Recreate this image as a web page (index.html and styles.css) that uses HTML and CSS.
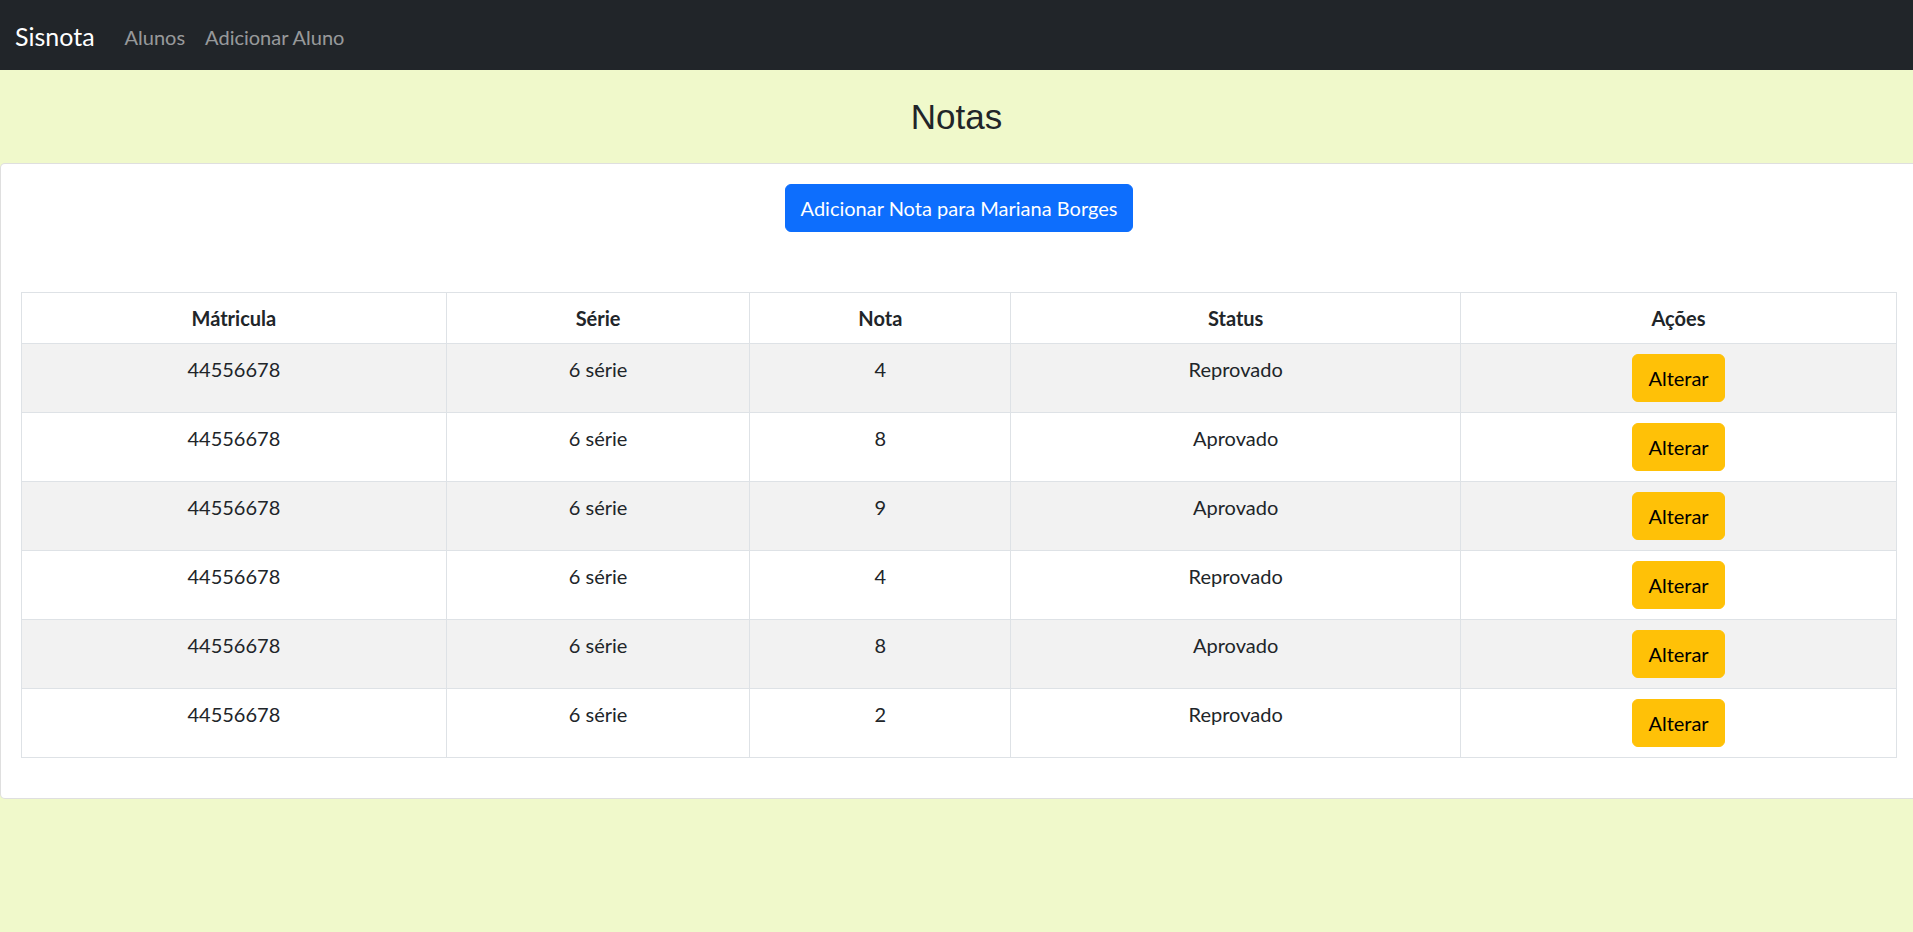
FILE: index.html
```html
<!DOCTYPE html>
<html lang="pt-BR">
<head>
<meta charset="utf-8">
<title>Sisnota</title>
<link rel="stylesheet" href="styles.css">
</head>
<body>
<nav class="navbar">
  <a class="brand" href="#">Sisnota</a>
  <a class="nav-link" href="#">Alunos</a>
  <a class="nav-link" href="#">Adicionar Aluno</a>
</nav>
<h2 class="page-title">Notas</h2>
<div class="card">
  <div class="actions">
    <button class="btn btn-primary">Adicionar Nota para Mariana Borges</button>
  </div>
  <table class="grades">
    <thead>
      <tr>
        <th class="c-mat">Mátricula</th>
        <th class="c-serie">Série</th>
        <th class="c-nota">Nota</th>
        <th class="c-status">Status</th>
        <th class="c-acoes">Ações</th>
      </tr>
    </thead>
    <tbody>
      <tr><td>44556678</td><td>6 série</td><td>4</td><td>Reprovado</td><td><button class="btn btn-warning">Alterar</button></td></tr>
      <tr><td>44556678</td><td>6 série</td><td>8</td><td>Aprovado</td><td><button class="btn btn-warning">Alterar</button></td></tr>
      <tr><td>44556678</td><td>6 série</td><td>9</td><td>Aprovado</td><td><button class="btn btn-warning">Alterar</button></td></tr>
      <tr><td>44556678</td><td>6 série</td><td>4</td><td>Reprovado</td><td><button class="btn btn-warning">Alterar</button></td></tr>
      <tr><td>44556678</td><td>6 série</td><td>8</td><td>Aprovado</td><td><button class="btn btn-warning">Alterar</button></td></tr>
      <tr><td>44556678</td><td>6 série</td><td>2</td><td>Reprovado</td><td><button class="btn btn-warning">Alterar</button></td></tr>
    </tbody>
  </table>
</div>
</body>
</html>
```

FILE: styles.css
```css
html, body {
  margin: 0;
  padding: 0;
}
body {
  background: #f0f9cb;
  font-family: Lato, "Liberation Sans", sans-serif;
  font-size: 20px;
  line-height: 1.5;
  color: #212529;
  overflow-x: hidden;
}
.navbar {
  height: 70px;
  box-sizing: border-box;
  background: #212529;
  display: flex;
  align-items: center;
  padding: 3px 15px 0;
}
.brand {
  color: #fff;
  font-size: 25px;
  text-decoration: none;
  margin-right: 20px;
}
.nav-link {
  color: rgba(255, 255, 255, 0.55);
  text-decoration: none;
  padding: 0 10px;
  font-size: 20px;
}
.page-title {
  margin: 26px 0 25px;
  font-family: "Liberation Sans", Arial, sans-serif;
  font-weight: normal;
  font-size: 35px;
  line-height: 42px;
  text-align: center;
  color: #212529;
}
.card {
  background: #fff;
  border: 1px solid rgba(0, 0, 0, 0.125);
  border-radius: 5px;
  padding: 20px;
  margin-right: -5px;
}
.actions {
  text-align: center;
  margin-bottom: 60px;
}
.btn {
  font-family: inherit;
  font-size: 20px;
  line-height: 30px;
  border: 1px solid transparent;
  border-radius: 6px;
  cursor: pointer;
  display: inline-block;
  vertical-align: top;
}
.btn-primary {
  background: #0d6efd;
  border-color: #0d6efd;
  color: #fff;
  padding: 8px 15px;
  height: 48px;
}
.btn-warning {
  background: #ffc107;
  border-color: #ffc107;
  color: #000;
  padding: 8px 15px;
  height: 48px;
}
.grades {
  width: 100%;
  border-collapse: collapse;
  border: 1px solid #dee2e6;
  margin-bottom: 20px;
}
.grades th,
.grades td {
  border: 1px solid #dee2e6;
  padding: 10px;
  text-align: center;
  vertical-align: top;
  line-height: 30px;
}
.grades th {
  font-weight: bold;
}
.grades tbody tr:nth-child(odd) td {
  background: #f2f2f2;
}
.c-mat { width: 22.65%; }
.c-serie { width: 16.2%; }
.c-nota { width: 13.91%; }
.c-status { width: 23.99%; }
.c-acoes { width: 23.25%; }
```
